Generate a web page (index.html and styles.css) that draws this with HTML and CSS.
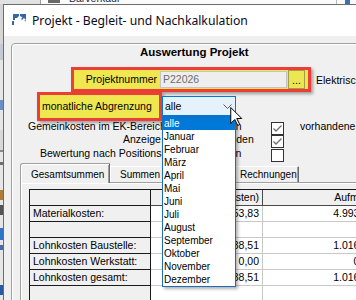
FILE: index.html
```html
<!DOCTYPE html>
<html lang="de">

<head>
    <meta charset="UTF-8">
    <meta name="viewport" content="width=device-width, initial-scale=1.0">
    <title>Projekt - Begleit- und Nachkalkulation</title>
    <link rel="stylesheet" href="styles.css">
</head>

<body>
    <!-- Desktop behind the dialog -->
    <div class="desk-top">
        <div class="dt-a"></div>
        <div class="dt-b"><span class="dt-icon"></span><span class="dt-text">Barverkauf</span></div>
        <div class="dt-c"><span class="dt-blue"></span></div>
    </div>

    <div class="desk">
        <div class="desk-left"></div>

        <div class="window">
            <div class="titlebar">
                <svg class="app-icon" width="14" height="12" viewBox="0 0 14 12">
                    <path d="M1 0H7V2L5 4H3V6H1Z" fill="#3468a4" />
                    <rect x="0" y="7" width="2" height="4" fill="#3468a4" />
                    <path d="M8 0H14V6L12 4L10 6L9 5L10.5 3.5L8 2Z" fill="#3468a4" />
                    <path d="M12 6L14 6L14 8Z" fill="#7aa6d6" />
                </svg>
                <span class="title">Projekt - Begleit- und Nachkalkulation</span>
            </div>

            <div class="win-body">
                <div class="group">
                    <div class="group-title">Auswertung Projekt</div>

                    <!-- Projektnummer -->
                    <div class="row row-proj">
                        <div class="mark mark-proj">
                            <span class="proj-label">Projektnummer</span>
                            <div class="textbox">P22026</div>
                            <button class="dots">...</button>
                        </div>
                        <span class="side-label">Elektrische Anlagen</span>
                    </div>

                    <!-- monatliche Abgrenzung -->
                    <div class="row row-month">
                        <div class="mark mark-month"><span class="month-label">monatliche Abgrenzung</span></div>
                        <div class="combo">
                            <span class="combo-value">alle</span>
                            <svg class="chevron" width="9" height="5" viewBox="0 0 9 5">
                                <path d="M0.5 0.5L4.5 4.5L8.5 0.5" fill="none" stroke="#5a5a5a" />
                            </svg>
                            <ul class="drop">
                                <li class="sel">alle</li>
                                <li>Januar</li>
                                <li>Februar</li>
                                <li>März</li>
                                <li>April</li>
                                <li>Mai</li>
                                <li>Juni</li>
                                <li>Juli</li>
                                <li>August</li>
                                <li>September</li>
                                <li>Oktober</li>
                                <li>November</li>
                                <li>Dezember</li>
                            </ul>
                            <svg class="cursor" width="13" height="19" viewBox="-0.5 -0.5 12.5 19">
                                <path d="M0 0V16L4 12L7 18L9 17L6 11H11Z" fill="#fff" stroke="#000" stroke-width="1" stroke-linejoin="round" />
                            </svg>
                        </div>
                    </div>

                    <!-- Optionen -->
                    <div class="opt opt-1">
                        <span class="opt-label">Gemeinkosten im EK-Bereich berücksichtigen</span>
                        <span class="chk"><svg width="11" height="11" viewBox="0 0 11 11"><path d="M1.5 5.5L4 8L9.5 2.5" fill="none" stroke="#6f6f6f" stroke-width="1.3" /></svg></span>
                        <span class="opt-note">vorhandene Aufmaße</span>
                    </div>
                    <div class="opt opt-2">
                        <span class="opt-label">Anzeige Kosten ausblenden</span>
                        <span class="chk"><svg width="11" height="11" viewBox="0 0 11 11"><path d="M1.5 5.5L4 8L9.5 2.5" fill="none" stroke="#6f6f6f" stroke-width="1.3" /></svg></span>
                    </div>
                    <div class="opt opt-3">
                        <span class="opt-label">Bewertung nach Positionspreisen ansetzen</span>
                        <span class="chk"></span>
                    </div>

                    <!-- Tabs -->
                    <div class="tabctl">
                        <div class="tabs">
                            <div class="tab tab-active">Gesamtsummen</div>
                            <div class="tab tab-sum">Summen nach Monaten</div>
                            <div class="tab tab-rech">Rechnungen</div>
                        </div>
                        <div class="tab-page">
                            <div class="grid">
                                <div class="cell fix"></div>
                                <div class="cell head num">Kalkulation (Kosten)</div>
                                <div class="cell head num head-2">Aufmaß</div>
                                <div class="cell head"></div>

                                <div class="cell fix">Materialkosten:</div>
                                <div class="cell num">2.353,83</div>
                                <div class="cell num">4.993,83</div>
                                <div class="cell"></div>

                                <div class="cell fix"></div>
                                <div class="cell num"></div>
                                <div class="cell num"></div>
                                <div class="cell"></div>

                                <div class="cell fix">Lohnkosten Baustelle:</div>
                                <div class="cell num">1.038,51</div>
                                <div class="cell num">1.016,51</div>
                                <div class="cell"></div>

                                <div class="cell fix">Lohnkosten Werkstatt:</div>
                                <div class="cell num">0,00</div>
                                <div class="cell num">0,00</div>
                                <div class="cell"></div>

                                <div class="cell fix">Lohnkosten gesamt:</div>
                                <div class="cell num">1.038,51</div>
                                <div class="cell num">1.016,51</div>
                                <div class="cell"></div>

                                <div class="cell fix"></div>
                                <div class="cell num"></div>
                                <div class="cell num"></div>
                                <div class="cell"></div>
                            </div>
                        </div>
                    </div>
                </div>
            </div>
        </div>
    </div>
</body>

</html>
```

FILE: styles.css
```css
body {
    margin: 0;
    width: 356px;
    height: 300px;
    overflow: hidden;
    font-family: "Liberation Sans", Arial, sans-serif;
    font-size: 10.5px;
    color: #000;
    background-color: #f0f0f0;
}

/* desktop behind the dialog */
.desk-top {
    display: flex;
    height: 4px;
    overflow: hidden;
}

.dt-a {
    width: 40px;
    background-color: #e2e2e2;
    border-right: 1px solid #9c9c9c;
}

.dt-b {
    width: 295px;
    display: flex;
    background-color: #fafafa;
}

.dt-icon {
    width: 12px;
    height: 3px;
    margin-left: 7px;
    background-color: #6a6a6a;
}

.dt-text {
    display: block;
    margin: -8px 0 0 9px;
    line-height: 12px;
    color: #1f2a44;
}

.dt-c {
    flex: 1;
    background-color: #fafafa;
    border-left: 1px solid #b9b9b9;
}

.dt-blue {
    display: block;
    width: 5px;
    height: 4px;
    margin-left: 8px;
    background-color: #3b6fb6;
}

.desk {
    display: flex;
    height: 296px;
}

.desk-left {
    width: 3px;
    background: linear-gradient(to bottom,
            #d6d6d6 0 40px, #c3cad3 40px 56px, #e6e6e6 56px 96px,
            #6a8fc8 96px 106px, #e6e6e6 106px 126px, #d8d8d8 126px 146px,
            #8a8a8a 146px 148px, #e6e6e6 148px 158px, #707070 158px 161px,
            #e6e6e6 161px 186px, #b07a3a 186px 196px, #e6e6e6 196px 201px,
            #555 201px 211px, #e6e6e6 211px 224px, #2f74c6 224px 236px,
            #e6e6e6 236px 241px, #4a6aa8 241px 246px, #e6e6e6 246px 281px,
            #2c5aa0 281px 291px, #e6e6e6 291px);
}

/* dialog window */
.window {
    flex: 1;
    min-width: 0;
    border-left: 1px solid #6d6d6d;
    border-top: 1px solid #6d6d6d;
    background-color: #f0f0f0;
}

.titlebar {
    display: flex;
    align-items: center;
    height: 31px;
    background-color: #fff;
}

.app-icon {
    margin-left: 8px;
    margin-top: -2px;
}

.title {
    margin-left: 6px;
    font-family: "Noto Sans", "Liberation Sans", sans-serif;
    font-size: 12.2px;
    color: #0a0a1e;
    white-space: nowrap;
}

.win-body {
    padding: 7px 0 0 7px;
}

.group {
    width: 420px;
    height: 300px;
    border: 1px solid #a0a0a0;
    border-radius: 4px;
    box-shadow: inset 1px 1px 0 #fff;
}

.group-title {
    margin-top: 1px;
    height: 14px;
    line-height: 14px;
    padding-left: 128px;
    font-size: 11.5px;
    font-weight: bold;
}

.row {
    display: flex;
    align-items: center;
}

.row-proj {
    margin-top: 8px;
}

/* red/yellow highlight marks */
.mark {
    box-sizing: border-box;
    border: 3px solid #ec3d37;
    background-color: #efe74f;
    box-shadow: 2px 2px 3px rgba(0, 0, 0, 0.35);
}

.mark-proj {
    display: flex;
    align-items: center;
    width: 240px;
    height: 25px;
    margin-left: 59px;
}

.proj-label {
    width: 86px;
    box-sizing: border-box;
    padding-right: 3px;
    text-align: right;
    line-height: 19px;
}

.textbox {
    width: 127px;
    height: 17px;
    box-sizing: border-box;
    padding-left: 2px;
    border: 1px solid #c4c4c4;
    background-color: #eeeeee;
    color: #6d6d6d;
    line-height: 15px;
}

.dots {
    width: 17px;
    height: 19px;
    margin-left: 1px;
    padding: 0;
    border: 1px solid #a39e45;
    background-color: #ece652;
    font-family: inherit;
    font-size: 10.5px;
    color: #000;
}

.side-label {
    margin-left: 5px;
    line-height: 12px;
    white-space: nowrap;
}

.row-month {
    align-items: flex-start;
}

.mark-month {
    width: 125px;
    height: 29px;
    margin-left: 25px;
}

.month-label {
    display: block;
    padding-left: 2px;
    line-height: 23px;
    white-space: nowrap;
}

/* opened combo box */
.combo {
    position: relative;
    display: flex;
    align-items: center;
    width: 74px;
    height: 20px;
    margin-top: 4px;
    box-sizing: border-box;
    border: 1px solid #0078d7;
    background-color: #e5f1fb;
}

.combo-value {
    padding-left: 2px;
    line-height: 18px;
}

.chevron {
    margin-left: auto;
    margin-right: 3px;
}

.drop {
    position: absolute;
    left: -1px;
    top: 19px;
    z-index: 10;
    width: 74px;
    box-sizing: border-box;
    margin: 0;
    padding: 0;
    list-style: none;
    border: 1px solid #1c6dbf;
    background-color: #fff;
    box-shadow: 2px 2px 3px rgba(0, 0, 0, 0.3);
    font-size: 10px;
}

.drop li {
    height: 13px;
    line-height: 13px;
    padding-left: 1px;
}

.drop .sel {
    background-color: #0078d7;
    color: #fff;
}

.cursor {
    position: absolute;
    left: 67px;
    top: 10px;
    z-index: 11;
}

/* check box rows */
.opt {
    display: flex;
    align-items: flex-start;
    height: 13px;
}

.opt-1 {
    margin-top: 1px;
}

.opt-2 {
    height: 14px;
}

.opt-label {
    width: 259px;
    box-sizing: border-box;
    line-height: 9.5px;
    white-space: nowrap;
}

.opt-1 .opt-label {
    padding-left: 16px;
}

.opt-2 .opt-label {
    padding-left: 111px;
}

.opt-3 .opt-label {
    padding-left: 28px;
}

.chk {
    display: flex;
    align-items: center;
    justify-content: center;
    width: 13px;
    height: 13px;
    box-sizing: border-box;
    border: 1px solid #333;
    background-color: #fff;
}

.opt-note {
    margin-left: 16px;
    line-height: 9.5px;
    white-space: nowrap;
}

/* tab control */
.tabctl {
    margin: 1px 0 0 8px;
}

.tabs {
    display: flex;
    align-items: flex-end;
    height: 19px;
}

.tab {
    height: 16px;
    box-sizing: border-box;
    padding-top: 2px;
    border-top: 1px solid #fff;
    border-left: 1px solid #fff;
    border-right: 1px solid #696969;
    box-shadow: inset -1px 0 0 #a0a0a0;
    font-size: 10px;
    line-height: 12px;
    white-space: nowrap;
    overflow: hidden;
}

.tab-active {
    position: relative;
    z-index: 1;
    width: 90px;
    height: 20px;
    margin-bottom: -1px;
    padding: 5px 0 0 10px;
    border-top-color: #a0a0a0;
    border-left-color: #a0a0a0;
    border-radius: 3px 0 0 0;
    background-color: #f0f0f0;
    box-shadow: inset 1px 1px 0 #fff, inset -1px 0 0 #a0a0a0;
}

.tab-sum {
    width: 125px;
    padding-left: 9px;
}

.tab-rech {
    width: 64px;
    padding-left: 4px;
}

.tab-page {
    height: 120px;
    padding: 6px 0 0 8px;
    border-top: 1px solid #a0a0a0;
    border-left: 1px solid #a0a0a0;
    box-shadow: inset 1px 1px 0 #fff;
}

/* data grid */
.grid {
    display: grid;
    grid-template-columns: 121px 112px 115px 100px;
    grid-auto-rows: 16px;
    width: max-content;
    border-top: 1px solid #1a1a1a;
    border-left: 1px solid #1a1a1a;
}

.cell {
    box-sizing: border-box;
    border-right: 1px solid #c8c8c8;
    border-bottom: 1px solid #c8c8c8;
    background-color: #fff;
    line-height: 15px;
    white-space: nowrap;
    overflow: hidden;
}

.cell.fix {
    padding-left: 3px;
    background-color: #f0f0f0;
    border-color: #1a1a1a;
}

.cell.head {
    background-color: #f0f0f0;
    border-color: #4a4a4a;
}

.cell.num {
    padding-right: 3px;
    text-align: right;
}

.cell.head-2 {
    padding-right: 6px;
}
```
